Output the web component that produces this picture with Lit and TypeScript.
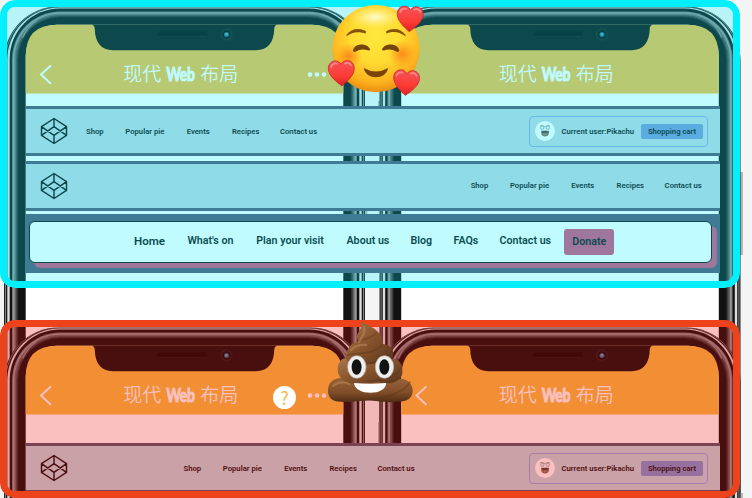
import { LitElement, html, css, svg } from "lit";
import { customElement } from "lit/decorators.js";

const links = ["Shop", "Popular pie", "Events", "Recipes", "Contact us"];

const phone = (dx: number, dy: number, back: boolean, dots: boolean) => {
  const shell = (x: number, y: number, r: number, fill: string) =>
    svg`<rect x=${x} y=${y} width=${369 - 2 * x} height="700" rx=${r} fill=${fill} />`;
  return svg`<g transform="translate(${dx} ${dy})">
    <rect x="2.5" y="101" width="3" height="30" fill="#b4b4b4" />
    <rect x="364" y="172" width="3.4" height="83" fill="#b4b4b4" />
    ${shell(4, 6.6, 54, "#222")}
    ${shell(5.2, 7, 53, "#999")}
    ${shell(6, 7.3, 52, "#181818")}
    ${shell(7.3, 7.6, 52, "#ddd")}
    ${shell(9.7, 8.5, 50, "#111")}
    ${shell(12, 11.5, 48, "#777")}
    ${shell(13, 12.4, 47, "#999")}
    ${shell(14.5, 13.8, 45, "#666")}
    ${shell(16, 15.2, 44, "#444")}
    ${shell(17.2, 16.2, 43, "#2b2b2b")}
    ${shell(18.2, 17.2, 42, "#111")}
    <path d="M23 37Q28 26 36 21M346 37Q341 26 333 21" fill="none" stroke="#888" stroke-width="1.4" stroke-linecap="round" />
    <rect x="25.7" y="24.8" width="317.6" height="700" rx="31" fill="#fff" />
    <path d="M25.7 93.6V56Q25.7 24.8 57 24.8H312Q343.3 24.8 343.3 56V93.6Z" fill="#f5bc44" />
    <path d="M91.5 24.5Q94.6 25 94.8 29C95 42 101 50.2 113 50.2H256C268 50.2 274 42 274.2 29Q274.4 25 277.5 24.5Z" fill="#111" />
    <rect x="157.5" y="31.3" width="50" height="5.2" rx="2.6" fill="#080808" />
    <path d="M159 36.6h47" stroke="#222" stroke-width=".6" />
    <circle cx="226.5" cy="34.5" r="6.2" fill="#1c1c1c" />
    <circle cx="226.5" cy="34.5" r="4.3" fill="#080b10" />
    <circle cx="226.5" cy="34.5" r="2.5" fill="#2d6680" />
    <circle cx="226.4" cy="34.3" r="1.3" fill="#60a6bd" />
    ${back ? svg`<path d="M50.3 66L41 74.6L50.3 83.2" fill="none" stroke="#fff" stroke-width="2" stroke-linecap="round" />` : ""}
    ${dots ? svg`<g fill="#fff"><circle cx="310" cy="74.6" r="2.3" /><circle cx="317" cy="74.6" r="2.3" /><circle cx="324" cy="74.6" r="2.3" /></g>` : ""}
    <g fill="#fff">
      <text class="cjk" x="123.3" y="81">现代</text>
      <text class="web" transform="translate(166.2 80.6) scale(.76 1)">Web</text>
      <text class="cjk" x="200.3" y="81">布局</text>
    </g>
  </g>`;
};

const logo = html`<svg class="logo" viewBox="0 0 24 24">
  <path d="M12 2L22 8.5V15.5L12 22L2 15.5V8.5ZM12 22V15.5M22 8.5L12 15.5L2 8.5M2 15.5L12 8.5L22 15.5M12 2V8.5" />
</svg>`;

const user = html`<div class="user">
  <svg class="avatar" viewBox="0 0 20 20">
    <circle cx="10" cy="10" r="10" fill="#fff" />
    <path d="M6 9.7H14.2L13.6 13.5Q12.8 15.6 10 15.6Q7.2 15.6 6.5 13.5Z" fill="#8b675a" />
    <path d="M6.3 10.9Q10 8.4 13.7 10.9L12.8 11.9H7.2Z" fill="#4d453e" />
    <path d="M8.3 13.2H11.7" stroke="#c9a594" stroke-width=".6" />
    <path d="M5 4.9Q7 3.8 9 5.3H11Q13 3.8 15 4.9" fill="none" stroke="#777" stroke-width=".6" />
    <circle cx="7.3" cy="6.7" r="1.7" fill="#f4f8fa" stroke="#557d8a" stroke-width=".6" />
    <circle cx="12.8" cy="6.7" r="1.7" fill="#f4f8fa" stroke="#557d8a" stroke-width=".6" />
  </svg>
  <span class="name">Current user:Pikachu</span>
  <span class="cart">Shopping cart</span>
</div>`;

const menu = html`<nav class="menu">${links.map((l) => html`<span>${l}</span>`)}</nav>`;

const heart = (x: number, y: number, r: number) => svg`<g transform="translate(${x} ${y}) rotate(${r})">
  <path d="M0 13.2C-5 9-13 3-13-4.6C-13-12-4-15 0-8.6C4-15 13-12 13-4.6C13 3 5 9 0 13.2Z" fill="url(#heart)" stroke="#c81f28" stroke-width=".7" />
  <path d="M-10.2-5.8Q-9-10.3-4.5-9.4M3.8-9Q7-11.2 10-7.2" stroke="#ff9c91" stroke-width="1.8" stroke-linecap="round" fill="none" opacity=".75" />
</g>`;

const smiley = html`<svg class="smiley" viewBox="325 0 105 105">
  <defs>
    <radialGradient id="face" cx=".5" cy=".36" r=".65">
      <stop offset="0" stop-color="#ffe83d" /><stop offset=".45" stop-color="#ffdb31" />
      <stop offset=".8" stop-color="#fdb41f" /><stop offset="1" stop-color="#e98911" />
    </radialGradient>
    <radialGradient id="shine"><stop offset="0" stop-color="#fffbd0" /><stop offset="1" stop-color="#fff27a" stop-opacity="0" /></radialGradient>
    <radialGradient id="blush"><stop offset="0" stop-color="#fb7414" stop-opacity=".75" /><stop offset="1" stop-color="#fb8414" stop-opacity="0" /></radialGradient>
    <linearGradient id="heart" x2="0" y2="1"><stop offset="0" stop-color="#f5525a" /><stop offset=".6" stop-color="#fb3c34" /><stop offset="1" stop-color="#dd2029" /></linearGradient>
  </defs>
  <circle cx="376" cy="48.7" r="43.6" fill="url(#face)" />
  <ellipse cx="375" cy="17" rx="28" ry="12" fill="url(#shine)" />
  <circle cx="349" cy="56" r="13" fill="url(#blush)" /><circle cx="402" cy="54" r="14" fill="url(#blush)" />
  <path d="M346.3 35C351 28.5 359 27.3 366 31.2L365.6 33.5C358 31 352 32 346.8 36ZM386.3 33.5L386.2 31.2C393 27.3 401 28.5 405.7 35L405 36C399 31.7 394 31 386.3 33.5Z" fill="#865108" />
  <path d="M353 50.5C354 42.5 368 42.5 370.2 49.6Q369.5 51.2 367 50Q361 48.3 355.7 51.5Q353.5 52.6 353 50.5ZM382 49.6C384 42.5 398 42.5 399.3 50.5Q398.6 52.6 396.4 51.5Q391 48.3 385.2 50Q382.5 51.2 382 49.6Z" fill="#74460d" />
  <path d="M363.7 68Q376 75 388 68C386.5 80 366 80.6 363.7 68Z" fill="#794509" />
  ${heart(410, 18.5, 3)} ${heart(341.5, 72.8, -2)} ${heart(406.3, 82.3, 4)}
</svg>`;

const poop = html`<svg class="poop" viewBox="320 315 105 105">
  <defs>
    <linearGradient id="swirl" x2="1" y2=".9"><stop offset="0" stop-color="#a8784d" /><stop offset=".45" stop-color="#8a572f" /><stop offset="1" stop-color="#5d371d" /></linearGradient>
    <linearGradient id="base" x2="0" y2="1"><stop offset="0" stop-color="#996338" /><stop offset=".6" stop-color="#804d29" /><stop offset="1" stop-color="#4f2c15" /></linearGradient>
  </defs>
  <path d="M341 378C333 378 328 383 328 391C328 398 333 402 341 401.8C352 403 366 399 376 401C388 403 398 402 404 401C410 400 413 395 412.7 390C412 382 405 378 399 379Z" fill="url(#base)" />
  <path d="M347 358C338 358 336 369 339 375C344 387 362 384 377 382C392 386 399 381 402 375C404 366 400 359 393 359Z" fill="url(#swirl)" />
  <path d="M347 361C344 349 352 343 358 341C354 332 363 332 361 322C373 327 383 332 383 344C393 345 396 353 391 361C380 365 359 365 347 361Z" fill="url(#swirl)" />
  <path d="M348 355C356 353 374 355 382 345M358 341C365 339 372 338 376 333M360 364C374 365 389 359 392 350M367 381C384 381 397 376 401 368M374 399C391 397 407 389 410 382" fill="none" stroke="#5b351b" stroke-width="1.7" opacity=".4" stroke-linecap="round" />
  <path d="M364 327C366 334 361 338 359 342M351 350Q356 344 366 345M333 386Q340 380 349 384" fill="none" stroke="#b8845a" stroke-width="2.3" opacity=".6" stroke-linecap="round" />
  <ellipse cx="356.8" cy="367" rx="9.2" ry="11.3" fill="#eee" stroke="#bbb3ac" stroke-width=".7" />
  <ellipse cx="384.5" cy="367" rx="9.2" ry="11.3" fill="#eee" stroke="#bbb3ac" stroke-width=".7" />
  <ellipse cx="356.6" cy="367" rx="5" ry="7.7" fill="#101214" /><ellipse cx="384.3" cy="367" rx="5" ry="7.7" fill="#101214" />
  <path d="M354 383Q370 384.5 386.2 383C386 396 355 396 354 383Z" fill="#fff" />
</svg>`;

@customElement("app-root")
export class AppRoot extends LitElement {
  static styles = css`
    :host { display: block; position: relative; width: 752px; height: 498px; overflow: hidden; background: #f4f4f4; color: #111; font-family: "Roboto", "Noto Sans", sans-serif; }
    * { box-sizing: border-box; }
    svg { display: block; }
    .phones { position: absolute; left: 0; top: 0; width: 752px; height: 498px; }
    .cjk { font: 350 19px "Noto Sans CJK SC", sans-serif; }
    .web { font: 900 18.5px Lato, sans-serif; stroke: #fff; stroke-width: 0.8px; letter-spacing: -0.4px; }
    .page { position: relative; display: flex; flex-direction: column; gap: 32px; width: 740px; }
    .panel { position: relative; padding-left: 26px; padding-right: 20px; overflow: hidden; border-radius: 15px; }
    .panel::after { content: ""; position: absolute; inset: 0; border-radius: 15px; border: 7px solid; }
    .good { height: 288px; padding-top: 106.3px; }
    .good::after { background: rgba(0, 240, 255, 0.25); background-clip: padding-box; border-color: #00f0ff; }
    .bad { height: 178px; padding-top: 123.3px; }
    .bad::after { background: rgba(235, 10, 8, 0.26); background-clip: padding-box; border-color: #ec431d; }
    .bar { display: flex; align-items: center; height: 50px; border: solid #545570; border-width: 3.5px 0 3px; background: #c0d5e1; padding: 0 12px 0 12.5px; }
    .bar + .bar { margin-top: 4.3px; }
    .logo { width: 30px; height: 30px; fill: none; stroke: #111; stroke-width: 1.15; stroke-linejoin: round; flex: none; }
    .menu { display: grid; grid-template-columns: 39.3px 61.4px 45.3px 48px 38px; margin-left: 17.5px; padding-top: 1px; font-size: 7.7px; line-height: 12px; font-weight: 600; white-space: nowrap; }
    .end .menu { margin-left: auto; margin-right: 5.4px; }
    .bad .menu { margin-left: 115px; }
    .user { display: flex; align-items: center; margin-left: auto; width: 179.5px; height: 30.5px; border: 1px solid #8ba6df; border-radius: 4px; padding: 0 4px 0 5px; font-size: 7.7px; font-weight: 600; white-space: nowrap; }
    .avatar { width: 20px; height: 20px; flex: none; }
    .name { margin-left: 7px; padding-top: 1px; }
    .cart { margin-left: auto; width: 62px; height: 15px; line-height: 15px; text-align: center; border-radius: 2px; background: #7895d5; }
    .band { height: 59px; margin-top: 3.7px; padding: 7px 8px 0 3px; background: #545570; }
    .card { display: grid; grid-template-columns: 53.4px 68.8px 90.3px 64px 43px 46px 64.5px 50.5px; align-items: center; height: 41.3px; padding-left: 104px; background: #fff; border: 1.5px solid #111; border-radius: 6px; box-shadow: 5px 5px 1px #d54f7c; font-size: 10.7px; font-weight: 600; white-space: nowrap; }
    .card span { margin-top: -2px; }
    .card .home { font-size: 11.6px; margin-top: -1px; }
    .card .donate { height: 26px; line-height: 26px; text-align: center; border-radius: 3px; background: #d54f7c; margin-top: 0; }
    .smiley, .poop, .help { position: absolute; width: 105px; height: 105px; }
    .smiley { left: 325px; top: 0; }
    .poop { left: 320px; top: 315px; }
    .help { left: 273px; top: 386px; width: 23px; height: 23px; border-radius: 50%; background: #fff; color: #f5bc44; font: 400 18px/22px "Noto Sans CJK SC", sans-serif; text-align: center; }
  `;

  render() {
    return html`
      <svg class="phones" viewBox="0 0 752 498">
        ${phone(0, 0, true, true)} ${phone(375.5, 0, false, false)}
        ${phone(0, 321, true, true)} ${phone(375.5, 321, true, false)}
      </svg>
      <main class="page">
        <section class="panel good">
          <div class="bar">${logo}${menu}${user}</div>
          <div class="bar end">${logo}${menu}</div>
          <div class="band">
            <nav class="card">
              <span class="home">Home</span><span>What's on</span><span>Plan your visit</span><span>About us</span>
              <span>Blog</span><span>FAQs</span><span>Contact us</span><span class="donate">Donate</span>
            </nav>
          </div>
        </section>
        <section class="panel bad">
          <div class="bar">${logo}${menu}${user}</div>
        </section>
      </main>
      ${smiley}${poop}
      <div class="help">?</div>
    `;
  }
}
